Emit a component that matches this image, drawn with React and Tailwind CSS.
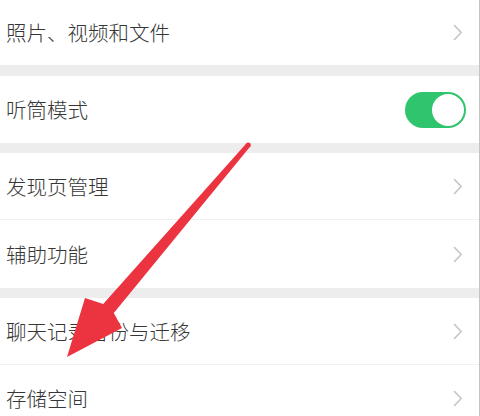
import React from 'react';

const font = { fontFamily: '"Noto Sans CJK SC", "Noto Sans", sans-serif' };

const Chevron = () => (
  <svg width="10" height="17" viewBox="0 0 10 17" fill="none" className="shrink-0">
    <path d="M1.5 1.5 L8.2 8.5 L1.5 15.5" stroke="#c4c4c4" strokeWidth="1.6" strokeLinecap="round" strokeLinejoin="round" />
  </svg>
);

const Toggle = () => (
  <div className="w-[61px] h-[36px] rounded-full bg-[#2fc46e] flex items-center justify-end p-[2px] shrink-0">
    <div className="w-[32px] h-[32px] rounded-full bg-white" />
  </div>
);

const Row = ({ label, height, divider, right = 'chevron' }) => (
  <div className={`bg-white flex ${height}`}>
    <div className={`flex-1 flex items-center justify-between pl-[6px] ${right === 'toggle' ? 'pr-[13px]' : 'pr-[16px]'} ${divider ? 'border-b border-[#f0f0f0]' : ''}`}>
      <span className="text-[20.5px] font-light text-[#363636] leading-none" style={font}>{label}</span>
      {right === 'toggle' ? <Toggle /> : <Chevron />}
    </div>
  </div>
);

const Arrow = () => (
  <svg className="absolute inset-0 pointer-events-none" width="480" height="416" viewBox="0 0 480 416">
    <polygon
      fill="#ec3440"
      points="246.5,143.2 250,146.8 113.8,312.9 122,328 67,357 85,298 103.2,303.9"
    />
    <circle cx="248.3" cy="145" r="2.5" fill="#ec3440" />
  </svg>
);

export default function App() {
  return (
    <div className="relative w-[480px] h-[416px] overflow-hidden bg-[#ededed] border-r border-[#c4c4c4]">
      <div className="flex flex-col">
        <Row label="照片、视频和文件" height="h-[65px]" />
        <div className="h-[11px]" />
        <Row label="听筒模式" height="h-[67px]" right="toggle" />
        <div className="h-[10px]" />
        <Row label="发现页管理" height="h-[67px]" divider />
        <Row label="辅助功能" height="h-[68px]" />
        <div className="h-[10px]" />
        <Row label="聊天记录备份与迁移" height="h-[67px]" divider />
        <Row label="存储空间" height="h-[67px]" />
      </div>
      <Arrow />
    </div>
  );
}
